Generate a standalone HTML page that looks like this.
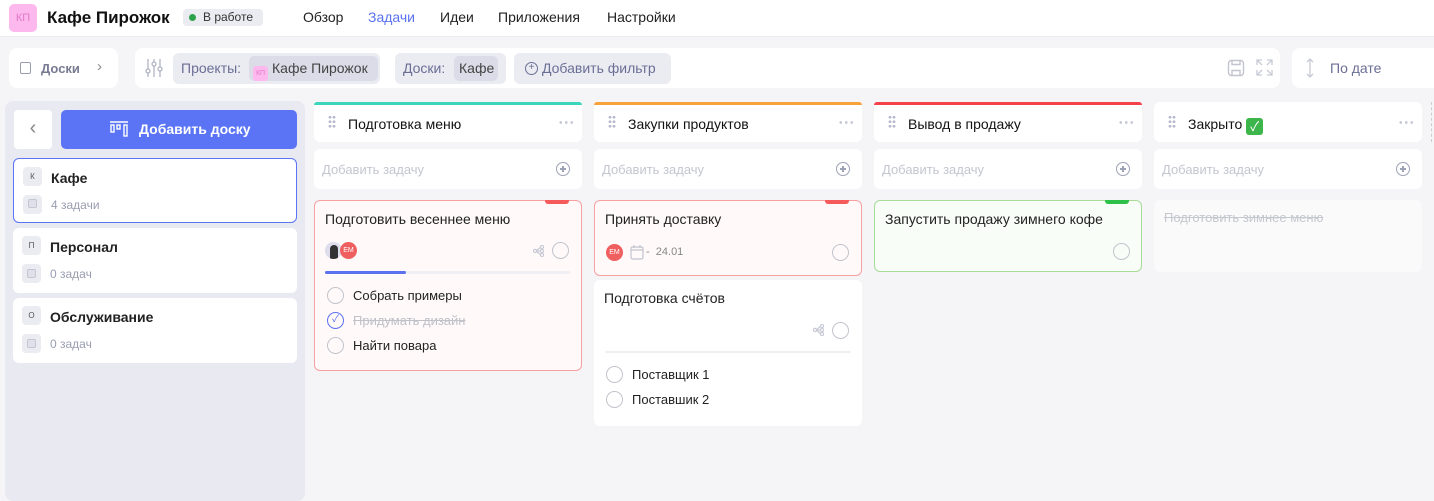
<!DOCTYPE html>
<html><head><meta charset="utf-8"><style>
*{box-sizing:border-box;margin:0;padding:0}
body{width:1434px;height:493px;overflow:hidden;background:#f5f5f8;font-family:"Liberation Sans","Noto Sans CJK SC",sans-serif;color:#222;position:relative;font-size:13px}
.a{position:absolute}
.hdr{left:0;top:0;width:1434px;height:37px;background:#fff;border-bottom:1px solid #ebebf0}
.nav{top:9px;font-size:14px;color:#222}
.box{background:#fff;border-radius:8px}
.chip{background:#ebebf2;border-radius:6px;height:31px;top:53px;color:#6a6f95;font-size:14px;line-height:31px;padding:0 8px}
.col{width:268px}
.colh{height:40px;background:#fff;border-radius:6px;top:102px}
.colh .bar{position:absolute;left:0;top:0;right:0;height:3px;border-radius:3px 3px 0 0}
.colh .t{position:absolute;left:34px;top:14px;font-size:14px;color:#111}
.drag{position:absolute;left:14px;top:13px;width:8px;height:14px;background:radial-gradient(circle,#b8bccc 1.3px,transparent 1.6px) 0 0/4px 4.5px}
.dots{position:absolute;right:8px;top:19px;width:16px;height:3px;background:radial-gradient(circle,#c3c6d3 1.2px,transparent 1.5px) 0 0/5.5px 3px}
.add{top:149px;height:40px;background:#fff;border-radius:6px}
.add span{position:absolute;left:8px;top:13px;color:#c4c6cf;font-size:13px}
.plus{position:absolute;right:12px;top:13px;width:14px;height:14px;border:1.5px solid #9da2b6;border-radius:50%}
.plus:before{content:"";position:absolute;left:2.5px;top:5px;width:6px;height:1.5px;background:#9da2b6}
.plus:after{content:"";position:absolute;left:5px;top:2.5px;width:1.5px;height:6px;background:#9da2b6}
.card{border-radius:6px}
.ct{position:absolute;left:10px;top:10px;font-size:14px;color:#222}
.circ{position:absolute;width:17px;height:17px;border:1.5px solid #c2c4cc;border-radius:50%;background:transparent}
.sub{position:absolute;left:38px;font-size:13px;color:#222}
.item{position:absolute;left:13px;width:284px;height:65px;background:#fff;border-radius:6px}
.item .ic{position:absolute;left:9px;width:19px;height:19px;background:#ebebf2;border-radius:4px;font-size:8px;color:#555;text-align:center;line-height:19px}
.item .n{position:absolute;left:37px;top:11px;font-size:14px;font-weight:bold;color:#222}
.item .c{position:absolute;left:37px;top:39px;font-size:12px;color:#9a9db0}
.mini{position:absolute;left:14px;top:41px;width:9px;height:9px;border:1.2px solid #c4c6d2;border-radius:2px;background:#e0e0ea}
.share{position:absolute}
</style></head><body>
<div class="a hdr"></div>
<div class="a" style="left:9px;top:4px;width:28px;height:28px;background:#fdb9ee;border-radius:5px;color:#e07ac9;font-size:11px;text-align:center;line-height:28px">КП</div>
<div class="a" style="left:47px;top:8px;font-size:17px;font-weight:bold;color:#111">Кафе Пирожок</div>
<div class="a" style="left:183px;top:9px;width:80px;height:17px;background:#ebebf2;border-radius:4px;font-size:12px;line-height:17px;color:#333"><span style="display:inline-block;width:7px;height:7px;border-radius:50%;background:#2ea24a;margin:0 7px 0 6px;vertical-align:0"></span>В работе</div>
<div class="a nav" style="left:303px">Обзор</div>
<div class="a nav" style="left:368px;color:#5a72f0">Задачи</div>
<div class="a nav" style="left:440px">Идеи</div>
<div class="a nav" style="left:498px">Приложения</div>
<div class="a nav" style="left:607px">Настройки</div>

<div class="a box" style="left:9px;top:48px;width:109px;height:40px"></div>
<div class="a" style="left:20px;top:62px;width:11px;height:12px;border:1.3px solid #9a9db0;border-radius:2px"></div>
<div class="a" style="left:41px;top:61px;font-size:13px;font-weight:bold;color:#777a90">Доски</div>
<div class="a" style="left:97px;top:58px;font-size:15px;color:#888">›</div>
<div class="a box" style="left:135px;top:48px;width:1145px;height:40px"></div>
<svg class="a" style="left:145px;top:58px" width="18" height="20" viewBox="0 0 18 20" fill="none" stroke="#b0b3c3" stroke-width="1.3"><path d="M3 1v18M9 1v18M15 1v18"/><circle cx="3" cy="13" r="2" fill="#fff"/><circle cx="9" cy="6" r="2" fill="#fff"/><circle cx="15" cy="11" r="2" fill="#fff"/></svg>
<div class="a chip" style="left:173px;width:207px">Проекты:</div>
<div class="a" style="left:249px;top:56px;width:129px;height:25px;background:#dcdce8;border-radius:5px;line-height:25px;font-size:14px;color:#444"><span style="display:inline-block;width:15px;height:15px;background:#fdb9ee;color:#e07ac9;font-size:7px;line-height:15px;text-align:center;border-radius:3px;margin:0 4px 0 4px;vertical-align:-2px">КП</span>Кафе Пирожок</div>
<div class="a chip" style="left:395px;width:111px">Доски:</div>
<div class="a" style="left:454px;top:56px;width:44px;height:25px;background:#dcdce8;border-radius:5px;line-height:25px;font-size:14px;color:#444;padding-left:5px">Кафе</div>
<div class="a chip" style="left:514px;width:157px;padding-left:28px">Добавить фильтр</div>
<div class="a" style="left:525px;top:62px;width:13px;height:13px;border:1.3px solid #6a6f95;border-radius:50%;font-size:10px;line-height:10px;text-align:center;color:#6a6f95">+</div>
<svg class="a" style="left:1227px;top:59px" width="18" height="18" viewBox="0 0 18 18" fill="none" stroke="#c2c4d0" stroke-width="1.4"><rect x="1.5" y="1.5" width="15" height="15" rx="3"/><path d="M5 1.5v4h8v-4M5 16.5v-5h8v5"/></svg>
<svg class="a" style="left:1256px;top:59px" width="17" height="17" viewBox="0 0 17 17" fill="none" stroke="#c8cad5" stroke-width="1.3"><path d="M1 6V1h5M1 1l5 5M16 6V1h-5M16 1l-5 5M1 11v5h5M1 16l5-5M16 11v5h-5M16 16l-5-5"/></svg>
<div class="a box" style="left:1292px;top:48px;width:150px;height:40px"></div>
<svg class="a" style="left:1306px;top:58px" width="8" height="20" viewBox="0 0 8 20" fill="none" stroke="#c8cad5" stroke-width="1.3"><path d="M4 1v18M1 4l3-3 3 3M1 16l3 3 3-3"/></svg>
<div class="a" style="left:1330px;top:60px;font-size:14px;color:#6a6f95">По дате</div>

<div class="a" style="left:5px;top:101px;width:300px;height:400px;background:#e9e9f1;border-radius:8px"></div>
<div class="a" style="left:14px;top:110px;width:38px;height:39px;background:#fff;border-radius:4px;color:#888;font-size:20px;text-align:center;line-height:36px">‹</div>
<div class="a" style="left:61px;top:110px;width:236px;height:39px;background:#5a74f5;border-radius:5px;color:#fff;font-size:14px;font-weight:bold;line-height:39px;padding-left:78px">Добавить доску</div>
<svg class="a" style="left:110px;top:121px" width="18" height="16" viewBox="0 0 18 16" fill="none" stroke="#fff" stroke-width="1.4"><path d="M0 1h18"/><rect x="1" y="4" width="3" height="7"/><rect x="7" y="4" width="3" height="4"/><rect x="14" y="4" width="3" height="11"/></svg>
<div class="item" style="top:158px;border:1px solid #5a74f5"><div class="ic" style="top:8px">К</div><div class="n">Кафе</div><div class="ic" style="top:36px"></div><div class="mini" style="left:14px;top:40px"></div><div class="c">4 задачи</div></div>
<div class="item" style="top:228px"><div class="ic" style="top:8px">П</div><div class="n">Персонал</div><div class="ic" style="top:36px"></div><div class="mini"></div><div class="c">0 задач</div></div>
<div class="item" style="top:298px"><div class="ic" style="top:8px">О</div><div class="n">Обслуживание</div><div class="ic" style="top:36px"></div><div class="mini"></div><div class="c">0 задач</div></div>

<div class="a col colh" style="left:314px"><div class="bar" style="background:#3bd6bc"></div><div class="drag"></div><div class="t">Подготовка меню</div><div class="dots"></div></div>
<div class="a col colh" style="left:594px"><div class="bar" style="background:#f8a23a"></div><div class="drag"></div><div class="t">Закупки продуктов</div><div class="dots"></div></div>
<div class="a col colh" style="left:874px"><div class="bar" style="background:#f5414a"></div><div class="drag"></div><div class="t">Вывод в продажу</div><div class="dots"></div></div>
<div class="a col colh" style="left:1154px"><div class="drag"></div><div class="t">Закрыто <span style="display:inline-block;width:17px;height:17px;background:#3cb54a;border-radius:3px;color:#fff;font-size:13px;text-align:center;line-height:17px;vertical-align:-2px">✓</span></div><div class="dots"></div></div>
<div class="a" style="left:1431px;top:102px;width:2px;height:40px;border-left:1px dashed #ccc"></div>
<div class="a col add" style="left:314px"><span>Добавить задачу</span><div class="plus"></div></div>
<div class="a col add" style="left:594px"><span>Добавить задачу</span><div class="plus"></div></div>
<div class="a col add" style="left:874px"><span>Добавить задачу</span><div class="plus"></div></div>
<div class="a col add" style="left:1154px"><span>Добавить задачу</span><div class="plus"></div></div>

<div class="a col card" style="left:314px;top:200px;height:171px;background:#fff9f9;border:1px solid #f7a0a0">
 <div class="a" style="right:12px;top:-1px;width:24px;height:4px;background:#f55b5b;border-radius:0 0 3px 3px"></div>
 <div class="ct">Подготовить весеннее меню</div>
 <div class="a" style="left:10px;top:41px;width:17px;height:17px;border-radius:50%;background:#dde;overflow:hidden"><div style="margin:3px auto 0;width:8px;height:14px;background:#333;border-radius:4px 4px 0 0"></div></div>
 <div class="a" style="left:25px;top:41px;width:17px;height:17px;border-radius:50%;background:#ef5f5f;color:#fff;font-size:7px;text-align:center;line-height:17px">EM</div>
 <svg class="share" style="left:218px;top:44px" width="11" height="12" viewBox="0 0 11 12" fill="none" stroke="#c8cad5" stroke-width="1.2"><circle cx="2" cy="6" r="1.6"/><circle cx="9" cy="2" r="1.6"/><circle cx="9" cy="6" r="1.6"/><circle cx="9" cy="10" r="1.6"/><path d="M3.5 6h4M3.5 5.5L7.5 2.5M3.5 6.5l4 3"/></svg>
 <div class="circ" style="left:237px;top:41px"></div>
 <div class="a" style="left:10px;top:70px;width:245px;height:3px;background:#f0f0f4;border-radius:2px"><div style="width:81px;height:3px;background:#5a72f0;border-radius:2px"></div></div>
 <div class="circ" style="left:12px;top:86px"></div><div class="sub" style="top:87px">Собрать примеры</div>
 <div class="circ" style="left:12px;top:111px;border-color:#5a72f0;color:#5a72f0;font-size:10px;line-height:14px;text-align:center">✓</div><div class="sub" style="top:112px;color:#c0c2ca;text-decoration:line-through">Придумать дизайн</div>
 <div class="circ" style="left:12px;top:136px"></div><div class="sub" style="top:137px">Найти повара</div>
</div>

<div class="a col card" style="left:594px;top:200px;height:76px;background:#fff9f9;border:1px solid #f7a0a0">
 <div class="a" style="right:12px;top:-1px;width:24px;height:4px;background:#f55b5b;border-radius:0 0 3px 3px"></div>
 <div class="ct">Принять доставку</div>
 <div class="a" style="left:11px;top:43px;width:17px;height:17px;border-radius:50%;background:#ef5f5f;color:#fff;font-size:7px;text-align:center;line-height:17px">EM</div>
 <svg class="a" style="left:35px;top:44px" width="14" height="15" viewBox="0 0 14 15" fill="none" stroke="#c2c4d0" stroke-width="1.2"><rect x="1" y="2" width="12" height="12" rx="1.5"/><path d="M1 5h12M4 0v3M10 0v3"/></svg>
 <div class="a" style="left:51px;top:45px;font-size:11px;color:#888">-&nbsp; 24.01</div>
 <div class="circ" style="left:237px;top:43px"></div>
</div>

<div class="a col card" style="left:594px;top:280px;height:146px;background:#fff">
 <div class="ct">Подготовка счётов</div>
 <svg class="share" style="left:219px;top:44px" width="11" height="12" viewBox="0 0 11 12" fill="none" stroke="#c8cad5" stroke-width="1.2"><circle cx="2" cy="6" r="1.6"/><circle cx="9" cy="2" r="1.6"/><circle cx="9" cy="6" r="1.6"/><circle cx="9" cy="10" r="1.6"/><path d="M3.5 6h4M3.5 5.5L7.5 2.5M3.5 6.5l4 3"/></svg>
 <div class="circ" style="left:238px;top:42px"></div>
 <div class="a" style="left:11px;top:71px;width:246px;height:2px;background:#f0f0f4"></div>
 <div class="circ" style="left:12px;top:86px"></div><div class="sub" style="top:87px">Поставщик 1</div>
 <div class="circ" style="left:12px;top:111px"></div><div class="sub" style="top:112px">Поставшик 2</div>
</div>

<div class="a col card" style="left:874px;top:200px;height:72px;background:#f9fdf8;border:1px solid #a8dc98">
 <div class="a" style="right:12px;top:-1px;width:24px;height:4px;background:#2ec14a;border-radius:0 0 3px 3px"></div>
 <div class="ct">Запустить продажу зимнего кофе</div>
 <div class="circ" style="left:238px;top:42px"></div>
</div>

<div class="a col card" style="left:1154px;top:200px;height:72px;background:#fafafb">
 <div class="ct" style="color:#c6c8d0;text-decoration:line-through;font-size:13px">Подготовить зимнее меню</div>
</div>
</body></html>
